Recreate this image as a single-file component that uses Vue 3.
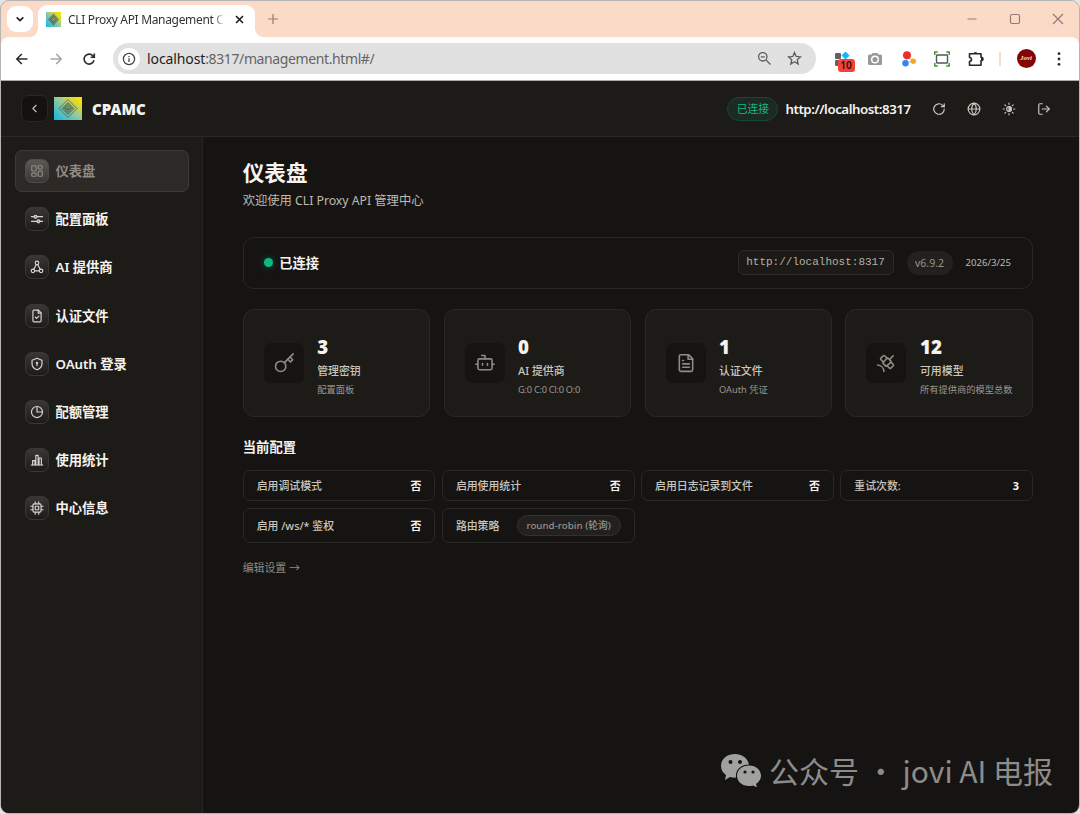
<script setup>
const icons = {
  back: '<path d="m15 18-6-6 6-6"/>',
  refresh: '<path d="M21 12a9 9 0 1 1-2.64-6.36L21 8"/><path d="M21 3v5h-5"/>',
  globe: '<circle cx="12" cy="12" r="10"/><path d="M2 12h20"/><path d="M12 2c5.3 5.6 5.3 14.400 0 20c-5.300-5.600-5.300-14.400 0-20"/>',
  sun: '<circle cx="12" cy="12" r="4"/><path d="M12 8a4 4 0 0 1 0 8z" fill="currentColor"/><path d="M12 2v2M12 20v2M4.900 4.900l1.400 1.400M17.700 17.700l1.400 1.400M2 12h2M20 12h2M6.300 17.700l-1.400 1.400M19.100 4.900l-1.400 1.400"/>',
  logout: '<path d="M9 21H5a2 2 0 0 1-2-2V5a2 2 0 0 1 2-2h4"/><path d="m16 17 5-5-5-5"/><path d="M21 12H9"/>',
  dashboard: '<rect x="3" y="3" width="7.500" height="9" rx="1.500"/><rect x="14" y="3" width="7" height="5.500" rx="1.500"/><rect x="14" y="12" width="7" height="9" rx="1.500"/><rect x="3" y="15.500" width="7.500" height="5.500" rx="1.500"/>',
  sliders: '<path d="M2.500 8h4M12.500 8h9M2.500 16h9M17.500 16h4"/><circle cx="9.500" cy="8" r="2.500" fill="currentColor" fill-opacity=".5"/><circle cx="14.500" cy="16" r="2.500" fill="currentColor" fill-opacity=".5"/>',
  provider: '<circle cx="12" cy="5" r="3"/><circle cx="5" cy="18.500" r="3"/><circle cx="19" cy="18.500" r="3"/><path d="M10.700 8 6.500 16M13.300 8l4.200 8M8 18.500h8"/>',
  fileCheck: '<path d="M14.500 2H7a2 2 0 0 0-2 2v16a2 2 0 0 0 2 2h10a2 2 0 0 0 2-2V6.500z"/><path d="M14 2v5h5"/><path d="m9 14 2.200 2.200 4-4"/>',
  shield: '<path d="M12 22s8.500-3.500 8.500-10V5.500L12 2 3.500 5.500V12c0 6.500 8.500 10 8.500 10z"/><circle cx="12" cy="10" r="1"/><path d="M12 11v4"/>',
  pie: '<circle cx="12" cy="12" r="9.500"/><path d="M12 2.500V12h9.500"/>',
  bars: '<path d="M2 20.500h20"/><path d="M4.500 20v-7h4v7M10 20V4h4v16M15.500 20V8.500h4V20"/>',
  chip: '<rect x="5" y="5" width="14" height="14" rx="2.500"/><rect x="9" y="9" width="6" height="6" rx="1"/><path d="M9 1.500V5M15 1.500V5M9 19v3.500M15 19v3.500M1.500 9H5M1.500 15H5M19 9h3.500M19 15h3.500"/>',
  key: '<circle cx="8" cy="16" r="6.200"/><path d="M12.500 11.500 23 1"/><path d="m16.500 7.500 3.300 3.300 2.700-2.700L19.200 4.800"/>',
  bot: '<path d="M12 7V3H8"/><rect x="3.500" y="7" width="17" height="13" rx="2"/><path d="M1 13.500h2M21 13.500h2M9 12.500v2.200M15 12.500v2.200"/>',
  fileText: '<path d="M15 2H6a2 2 0 0 0-2 2v16a2 2 0 0 0 2 2h12a2 2 0 0 0 2-2V7z"/><path d="M14.500 2v5.500H20M9 9H8M16 13H8M16 17H8"/>',
  satellite: '<path d="m13.500 6.500-3.200-3.200a1.200 1.200 0 0 0-1.600 0L5.800 6.200a1.200 1.200 0 0 0 0 1.600L9 11M17.500 10.500l3.200 3.200a1.200 1.200 0 0 1 0 1.600l-2.900 2.900a1.200 1.200 0 0 1-1.600 0L13 15"/><path d="m8.500 11.500 4.500-5a1.200 1.200 0 0 1 1.700 0l3 3a1.200 1.200 0 0 1 0 1.700l-4.700 4.300a1.200 1.200 0 0 1-1.600 0L8.500 12.500a1 1 0 0 1 0-1"/><path d="m16.500 7.500 4-4M2 14.500a8 8 0 0 1 7.500 7.500"/>'
}

const menu = [
  { icon: 'dashboard', label: '仪表盘', active: true },
  { icon: 'sliders', label: '配置面板' },
  { icon: 'provider', label: 'AI 提供商' },
  { icon: 'fileCheck', label: '认证文件' },
  { icon: 'shield', label: 'OAuth 登录' },
  { icon: 'pie', label: '配额管理' },
  { icon: 'bars', label: '使用统计' },
  { icon: 'chip', label: '中心信息' }
]

const stats = [
  { icon: 'key', value: 3, label: '管理密钥', sub: '配置面板' },
  { icon: 'bot', value: 0, label: 'AI 提供商', sub: 'G:0 C:0 Cl:0 O:0', tight: true },
  { icon: 'fileText', value: 1, label: '认证文件', sub: 'OAuth 凭证' },
  { icon: 'satellite', value: 12, label: '可用模型', sub: '所有提供商的模型总数' }
]

const config = [
  { label: '启用调试模式', value: '否' },
  { label: '启用使用统计', value: '否' },
  { label: '启用日志记录到文件', value: '否' },
  { label: '重试次数:', value: '3' },
  { label: '启用 /ws/* 鉴权', value: '否' },
  { label: '路由策略', value: 'round-robin (轮询)', pill: true }
]

const headerIcons = ['refresh', 'globe', 'sun', 'logout']
</script>

<template>
  <div class="window">
    <div class="tabstrip">
      <button class="tab-search">
        <svg width="10" height="10" viewBox="0 0 10 10"><path d="m1.700 3.300 3.300 3.200 3.300-3.200" /></svg>
      </button>
      <div class="tab">
        <svg class="favicon" width="15" height="15" viewBox="0 0 28 23" preserveAspectRatio="none">
          <defs>
            <linearGradient id="brand" x1="0" y1="1" x2="1" y2="0">
              <stop offset="0" stop-color="#12b4e8" />
              <stop offset=".5" stop-color="#8fc9a0" />
              <stop offset=".85" stop-color="#f4dd12" />
              <stop offset="1" stop-color="#ffe000" />
            </linearGradient>
          </defs>
          <rect width="28" height="23" fill="url(#brand)" />
          <path d="M14 3 23 11.500 14 20 5 11.500zM14 6l5 5.500-5 5.500-5-5.500z" fill="#55664f" fill-opacity=".5" stroke="#4a5544" />
        </svg>
        <span class="tab-title">CLI Proxy API Management C</span>
        <svg class="tab-close" width="9" height="9" viewBox="0 0 9 9"><path d="m1 1 7 7M8 1 1 8" /></svg>
      </div>
      <svg class="tab-new" width="12" height="12" viewBox="0 0 12 12"><path d="M6 1v10M1 6h10" /></svg>
      <div class="window-controls">
        <svg viewBox="0 0 12 12"><path d="M1.500 6h9" /></svg>
        <svg viewBox="0 0 12 12"><rect x="1.500" y="1.500" width="9" height="9" rx="1.500" /></svg>
        <svg viewBox="0 0 12 12"><path d="m1 1 10 10M11 1 1 11" /></svg>
      </div>
    </div>

    <div class="toolbar">
      <div class="nav-buttons">
        <svg viewBox="0 0 14 14"><path d="M12.500 7H2M6.800 2 1.800 7l5 5" /></svg>
        <svg class="disabled" viewBox="0 0 14 14"><path d="M1.500 7H12M7.200 2l5 5-5 5" /></svg>
        <svg viewBox="0 0 14 14"><path d="M12 8.200A5 5 0 1 1 10.900 3.800L12.200 5M12.300 1.500V5.200H8.700" /></svg>
      </div>
      <div class="omnibox">
        <span class="site-info">
          <svg width="14" height="14" viewBox="0 0 14 14"><circle cx="7" cy="7" r="5.600" /><path d="M7 6.300v3.700M7 4v1.200" /></svg>
        </span>
        <span class="address"><b>localhost</b>:8317/management.html#/</span>
        <svg class="omni-icon" width="15" height="15" viewBox="0 0 15 15"><circle cx="5.800" cy="5.800" r="4.200" /><path d="m9 9 4.500 4.500M3.800 5.800h4" /></svg>
        <svg class="omni-icon" width="15" height="15" viewBox="0 0 15 15"><path d="m7.500 1.500 1.700 4 4.300.4-3.300 2.800 1 4.300-3.700-2.300L3.800 13l1-4.300L1.500 5.900l4.300-.4z" /></svg>
      </div>
      <div class="extensions">
        <span class="ext">
          <svg width="16" height="16" viewBox="0 0 16 16"><rect x="1" y="2" width="6" height="6" rx="1" fill="#5f6368" /><rect x="1" y="9" width="6" height="6" rx="1" fill="#5f6368" /><path d="m11.500 1 3.500 3.500L11.500 8 8 4.500z" fill="#16b4f0" stroke="#16b4f0" /></svg>
          <span class="ext-badge">10</span>
        </span>
        <svg width="16" height="16" viewBox="0 0 16 16"><path d="M1 5q0-1.500 1.500-1.500h2L5.700 2h4.600l1.200 1.500h2Q15 3.500 15 5v7.500q0 1.500-1.500 1.500h-11Q1 14 1 12.500z" fill="#999" /><circle cx="8" cy="8.500" r="3.300" fill="#999" stroke="#fff" stroke-width="1.500" /></svg>
        <svg width="16" height="16" viewBox="0 0 16 16"><path d="m6 5-1 7 7-2z" fill="none" stroke="#bbb" /><circle cx="6" cy="4.300" r="4" fill="#f12d28" /><circle cx="4.500" cy="12.300" r="3.200" fill="#3185f5" /><circle cx="12.300" cy="10.300" r="2.700" fill="#f6a821" /></svg>
        <svg width="16" height="16" viewBox="0 0 16 16" fill="none"><rect x="2.500" y="4" width="11" height="8" rx=".7" stroke="#50565a" stroke-width="1.400" /><path d="M.8 4V1h3M12.200 1h3v3M15.200 12v3h-3M3.800 15h-3v-3" stroke="#3e983a" stroke-width="1.500" /></svg>
        <svg width="16" height="16" viewBox="0 0 16 16" fill="none"><path d="M1.500 2.800h11.500v3.400c2.600.2 2.600 3.400 0 3.600v4.400H1.500v-3.700c2.600-.2 2.600-3.800 0-4z" stroke="#26282b" stroke-width="1.600" stroke-linejoin="round" /><path d="M5.500 2.800a1.900 1.900 0 0 1 3.800 0M13 6.200a1.900 1.900 0 0 1 0 3.600" fill="#26282b" /></svg>
        <i class="divider"></i>
        <span class="avatar">Jovi</span>
        <svg class="kebab" width="4" height="16" viewBox="0 0 4 16"><circle cx="2" cy="2.700" r="1.400" /><circle cx="2" cy="8" r="1.400" /><circle cx="2" cy="13.300" r="1.400" /></svg>
      </div>
    </div>

    <div class="app">
      <header class="header">
        <button class="collapse">
          <svg class="icon" width="13" height="13" viewBox="0 0 24 24" v-html="icons.back"></svg>
        </button>
        <svg class="logo" width="28" height="23" viewBox="0 0 28 23">
          <rect width="28" height="23" fill="url(#brand)" />
          <g fill="none" stroke="#536047" stroke-width=".8">
            <path d="M14 2.500 23 11.500 14 20.500 5 11.500z" />
            <path d="M14 5.500 20 11.500 14 17.500 8 11.500z" fill="#536047" fill-opacity=".3" />
            <path d="M12 8v7M14 6.500v10M16 8v7M10 10.500v2M18 10.500v2M10 10.500 14 13l4-2.500" />
          </g>
        </svg>
        <span class="brand">CPAMC</span>
        <div class="header-right">
          <span class="badge">已连接</span>
          <span class="server">http://localhost:8317</span>
          <div class="actions">
            <svg v-for="name in headerIcons" :key="name" class="icon" width="14" height="14" viewBox="0 0 24 24" v-html="icons[name]"></svg>
          </div>
        </div>
      </header>

      <div class="body">
        <nav class="sidebar">
          <a v-for="item in menu" :key="item.label" class="nav-item" :class="{ active: item.active }">
            <span class="nav-icon">
              <svg class="icon" width="14" height="14" viewBox="0 0 24 24" v-html="icons[item.icon]"></svg>
            </span>
            <span>{{ item.label }}</span>
          </a>
        </nav>

        <main class="main">
          <h1>仪表盘</h1>
          <p class="subtitle">欢迎使用 CLI Proxy API 管理中心</p>

          <section class="status">
            <i class="dot"></i>
            <strong>已连接</strong>
            <div class="status-meta">
              <code>http://localhost:8317</code>
              <span class="version">v6.9.2</span>
              <span class="date">2026/3/25</span>
            </div>
          </section>

          <section class="stats">
            <article v-for="s in stats" :key="s.label" class="stat">
              <span class="stat-icon">
                <svg class="icon" width="20" height="20" viewBox="0 0 24 24" v-html="icons[s.icon]"></svg>
              </span>
              <div class="stat-text">
                <div class="stat-value">{{ s.value }}</div>
                <div class="stat-label">{{ s.label }}</div>
                <div class="stat-sub" :class="{ tight: s.tight }">{{ s.sub }}</div>
              </div>
            </article>
          </section>

          <h2>当前配置</h2>
          <section class="config">
            <div v-for="c in config" :key="c.label" class="config-item">
              <span>{{ c.label }}</span>
              <span :class="c.pill ? 'pill' : 'value'">{{ c.value }}</span>
            </div>
          </section>
          <a class="edit">编辑设置 →</a>
        </main>
      </div>
    </div>

    <div class="watermark">
      <svg width="42" height="34" viewBox="0 0 42 34">
        <path d="M15 1C7 1 1 6 1 13c0 4 2 7 5 9l-1 5 5-3q3 .8 6 .6C15 17 21 11.500 29 11.500 27.500 5 22 1 15 1z" />
        <path d="M29 12.500c-7 0-12 4.500-12 10.300S22 33 29 33q2 0 4-.6l4 2-1-3.500c3-2 5-4.800 5-8.100 0-5.800-5-10.300-12-10.300z" />
        <g class="eyes"><circle cx="10.500" cy="9" r="2" /><circle cx="20" cy="9" r="2" /><circle cx="25" cy="19" r="1.600" /><circle cx="33" cy="19" r="1.600" /></g>
      </svg>
      <span>公众号 · jovi AI 电报</span>
    </div>
  </div>
</template>

<style>
body {
  margin: 0;
  background: #e4e4e4;
}
</style>

<style scoped>
.window {
  position: relative;
  box-sizing: border-box;
  width: 1080px;
  height: 814px;
  border: 1px solid #b5b5b5;
  border-radius: 9px;
  overflow: hidden;
  display: flex;
  flex-direction: column;
  background: #fcdac8;
  font-family: "Noto Sans", "Noto Sans CJK SC", sans-serif;
}

svg {
  display: block;
  flex: none;
}

button {
  padding: 0;
  border: 0;
}

/* browser chrome */
.tabstrip {
  height: 36px;
  flex: none;
  display: flex;
  align-items: center;
  padding-left: 6px;
  box-sizing: border-box;
}

.tab-search {
  width: 26px;
  height: 26px;
  border-radius: 9px;
  background: #fff;
  display: grid;
  place-items: center;
}

.tab-search path,
.tab-close path {
  fill: none;
  stroke: #222;
  stroke-width: 1.7;
}

.tab {
  position: relative;
  align-self: flex-end;
  box-sizing: border-box;
  width: 217px;
  height: 32px;
  margin-left: 5px;
  padding: 0 11px 3px 8px;
  border-radius: 9px 9px 0 0;
  background: #fff;
  display: flex;
  align-items: center;
}

.tab::before,
.tab::after {
  content: "";
  position: absolute;
  bottom: 0;
  width: 8px;
  height: 8px;
}

.tab::before {
  left: -8px;
  background: radial-gradient(circle at 0 0, transparent 7.5px, #fff 8px);
}

.tab::after {
  right: -8px;
  background: radial-gradient(circle at 100% 0, transparent 7.5px, #fff 8px);
}

.tab-title {
  width: 158px;
  margin-left: 7px;
  white-space: nowrap;
  font-size: 12px;
  letter-spacing: -0.330px;
  color: #333;
  mask-image: linear-gradient(90deg, #000 92%, transparent 99%);
}

.tab-close {
  margin-left: auto;
}

.tab-new {
  margin-left: 12px;
}

.tab-new path,
.window-controls svg {
  fill: none;
  stroke: #8f7c74;
  stroke-width: 1.2;
}

.window-controls {
  display: flex;
  gap: 31px;
  margin-left: auto;
  margin-right: 15px;
}

.window-controls svg {
  width: 12px;
  height: 12px;
}

.toolbar {
  height: 44px;
  flex: none;
  box-sizing: border-box;
  display: flex;
  align-items: center;
  padding: 0 18px 0 14px;
  border-radius: 8px 8px 0 0;
  border-bottom: 1px solid #aaa;
  background: #fff;
}

.nav-buttons {
  display: flex;
  gap: 19.500px;
}

.nav-buttons svg {
  width: 14px;
  height: 14px;
  fill: none;
  stroke: #2b2d30;
  stroke-width: 1.6;
}

.nav-buttons .disabled {
  stroke: #a6a6a6;
}

.omnibox {
  box-sizing: border-box;
  width: 703px;
  height: 31px;
  margin-left: 17px;
  padding: 0 14px 0 5px;
  border-radius: 16px;
  background: #e1e1e1;
  display: flex;
  align-items: center;
  gap: 15px;
}

.site-info {
  width: 22px;
  height: 22px;
  border-radius: 50%;
  background: #fff;
  display: grid;
  place-items: center;
}

.site-info svg,
.omni-icon {
  fill: none;
  stroke: #444;
  stroke-width: 1.3;
}

.omni-icon {
  stroke: #5b5e62;
}

.address {
  flex: 1;
  margin-left: -8px;
  font-size: 14px;
  letter-spacing: -0.390px;
  color: #646464;
}

.address b {
  font-weight: 400;
  letter-spacing: -0.1px;
  color: #1d1d1d;
}

.extensions {
  display: flex;
  align-items: center;
  gap: 17.500px;
  margin-left: auto;
}

.ext {
  position: relative;
}

.ext-badge {
  position: absolute;
  left: 4px;
  top: 8px;
  width: 17px;
  height: 13px;
  border-radius: 3px;
  background: #f44336;
  font-size: 10px;
  font-weight: 600;
  line-height: 13px;
  text-align: center;
  color: #2a0f0c;
}

.divider {
  width: 2px;
  height: 14px;
  margin: 0 -1px 0 -2px;
  background: #fcdac8;
}

.avatar {
  width: 19px;
  height: 19px;
  margin: 0 4px 0 -1px;
  border-radius: 50%;
  background: #830404;
  font: italic 700 7px/18px "Liberation Serif", serif;
  text-align: center;
  color: #f5dede;
}

.kebab {
  fill: #2b2d30;
}

/* application */
.app {
  flex: 1;
  min-height: 0;
  display: flex;
  flex-direction: column;
  background: #151412;
  color: #f5f3ef;
}

.icon {
  fill: none;
  stroke: currentColor;
  stroke-width: 2;
  stroke-linecap: round;
  stroke-linejoin: round;
}

.header {
  height: 56px;
  flex: none;
  box-sizing: border-box;
  display: flex;
  align-items: center;
  padding: 0 28.500px 0 20px;
  border-bottom: 1px solid #2b2926;
  background: #1d1b18;
}

.collapse {
  box-sizing: border-box;
  width: 27px;
  height: 27px;
  border: 1px solid #292724;
  border-radius: 7px;
  background: #131211;
  color: #c9c5bd;
  display: grid;
  place-items: center;
}

.logo {
  margin-left: 6px;
}

.brand {
  margin-left: 10px;
  font-size: 15px;
  font-weight: 900;
  letter-spacing: 0.050px;
}

.header-right {
  margin-left: auto;
  display: flex;
  align-items: center;
}

.badge {
  box-sizing: border-box;
  width: 51px;
  height: 24px;
  border: 1px solid #164936;
  border-radius: 12px;
  background: #1b2a22;
  font-size: 10.800px;
  line-height: 22px;
  text-align: center;
  color: #12b981;
}

.server {
  width: 126px;
  margin-left: 7px;
  font-size: 13.300px;
  font-weight: 600;
  letter-spacing: -0.460px;
  white-space: nowrap;
}

.actions {
  display: flex;
  gap: 20.700px;
  margin-left: 21px;
  color: #cbc7c0;
}

.body {
  flex: 1;
  min-height: 0;
  display: flex;
}

.sidebar {
  box-sizing: border-box;
  width: 202px;
  flex: none;
  padding: 13px 13.500px 0 14px;
  border-right: 1px solid #272421;
  background: #1d1b18;
  display: flex;
  flex-direction: column;
  gap: 6.200px;
}

.nav-item {
  box-sizing: border-box;
  height: 42px;
  padding-left: 9px;
  border: 1px solid transparent;
  border-radius: 7px;
  display: flex;
  align-items: center;
  gap: 6.500px;
  font-size: 13.300px;
  font-weight: 600;
  letter-spacing: -0.050px;
}

.nav-item > span:last-child {
  margin-top: -1px;
}

.nav-item.active {
  border-color: #3e3b37;
  background: #2d2926;
  color: #918b84;
}

.nav-icon {
  box-sizing: border-box;
  width: 24px;
  height: 24px;
  border: 1px solid #3a3835;
  border-radius: 7px;
  background: linear-gradient(#383735, #1c1b1a);
  color: #d9d6d0;
  display: grid;
  place-items: center;
}

.active .nav-icon {
  border-color: #4f4c49;
  background: linear-gradient(#5b5956, #3a3734);
  color: #918b84;
}

.main {
  flex: 1;
  padding: 20px 46px 0 39.700px;
}

h1,
h2,
p {
  margin: 0;
}

h1 {
  font-size: 21.600px;
  font-weight: 700;
  line-height: 32px;
}

.subtitle {
  margin-top: 1px;
  font-size: 12.350px;
  line-height: 22px;
  letter-spacing: -0.05px;
  color: #bfbab0;
}

.status {
  box-sizing: border-box;
  height: 52.500px;
  margin-top: 24.500px;
  padding: 0 20px;
  border: 1px solid #2a2825;
  border-radius: 11px;
  display: flex;
  align-items: center;
}

.dot {
  width: 9px;
  height: 9px;
  border-radius: 50%;
  background: #10b981;
  box-shadow: 0 0 7px #10b98166;
}

.status strong {
  margin-left: 6.500px;
  font-size: 13.300px;
  font-weight: 600;
}

.status-meta {
  margin-left: auto;
  display: flex;
  align-items: center;
  gap: 13px;
}

code {
  box-sizing: border-box;
  width: 156px;
  height: 25px;
  border: 1px solid #2d2b28;
  border-radius: 6px;
  background: #1b1a17;
  font: 11px/23px "Liberation Mono", monospace;
  text-align: center;
  color: #b5b0a6;
}

.version {
  width: 46px;
  height: 24px;
  border-radius: 12px;
  background: #23211f;
  font-size: 10.500px;
  line-height: 24px;
  text-align: center;
  color: #98928a;
}

.date {
  width: 46.500px;
  font-size: 9.600px;
  color: #bfbab0;
}

.stats {
  display: grid;
  grid-template-columns: repeat(4, 1fr);
  gap: 13.400px;
  margin-top: 20px;
}

.stat {
  box-sizing: border-box;
  height: 107.500px;
  padding-left: 20px;
  border: 1px solid #2a2825;
  border-radius: 11px;
  background: #1d1b18;
  display: flex;
  align-items: center;
  gap: 13.500px;
}

.stat-icon {
  width: 40px;
  height: 40px;
  border-radius: 7px;
  background: #151412;
  color: #918b84;
  display: grid;
  place-items: center;
}

.stat-icon .icon {
  stroke-width: 1.9;
}

.stat-text {
  padding-top: 7px;
}

.stat-value {
  font-size: 18.700px;
  font-weight: 900;
  line-height: 22px;
}

.stat-label {
  margin-top: 4px;
  font-size: 10.900px;
  font-weight: 500;
  line-height: 18px;
  color: #cbc6bd;
}

.stat-sub {
  margin-top: 3px;
  font-size: 9.250px;
  line-height: 14px;
  color: #9c968e;
  white-space: nowrap;
}

.stat-sub.tight {
  letter-spacing: -0.280px;
}

h2 {
  margin-top: 20px;
  font-size: 13.350px;
  font-weight: 700;
  line-height: 20px;
}

.config {
  display: grid;
  grid-template-columns: repeat(4, 1fr);
  grid-template-rows: 31.500px 35px;
  gap: 6.500px;
  margin-top: 13px;
}

.config-item {
  box-sizing: border-box;
  padding: 0 13px;
  border: 1px solid #2a2825;
  border-radius: 7px;
  display: flex;
  align-items: center;
  justify-content: space-between;
  font-size: 10.900px;
  font-weight: 500;
  letter-spacing: -0.030px;
  color: #cbc6bd;
}

.value {
  font-weight: 700;
  color: #f5f3ef;
}

.pill {
  box-sizing: border-box;
  width: 104px;
  height: 21px;
  border: 1px solid #34322f;
  border-radius: 11px;
  background: #23211f;
  font-size: 9.700px;
  line-height: 19px;
  text-align: center;
  letter-spacing: 0.050px;
  white-space: nowrap;
  color: #98928a;
}

.edit {
  display: block;
  margin-top: 16px;
  font-size: 10.900px;
  line-height: 18px;
  color: #8f8982;
}

.watermark {
  position: absolute;
  left: 719px;
  top: 752px;
  display: flex;
  align-items: center;
  gap: 7px;
  font-family: "Noto Sans CJK SC", sans-serif;
  font-size: 30px;
  line-height: 34px;
  white-space: nowrap;
  color: #8d8c8b;
}

.watermark svg {
  fill: #a1a19f;
}

.watermark .eyes {
  fill: #151412;
}
</style>
